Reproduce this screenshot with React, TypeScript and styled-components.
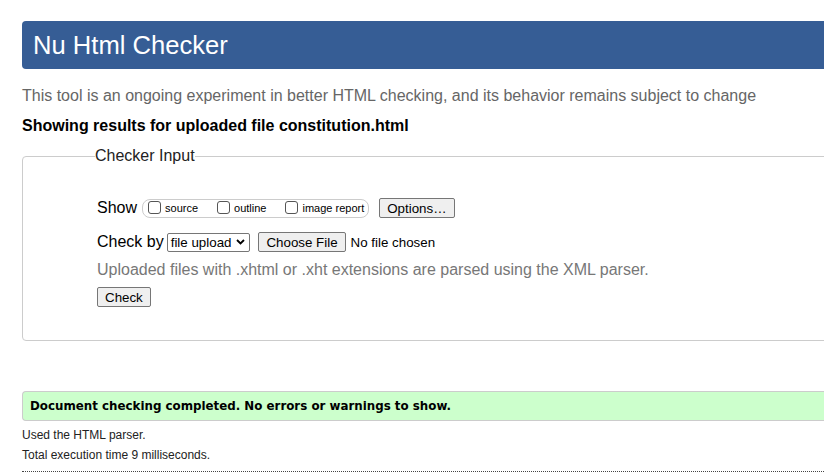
import React from "react";
import styled, { createGlobalStyle } from "styled-components";

const Global = createGlobalStyle`
  html, body { margin: 0; padding: 0; background: #fff; overflow: hidden; }
  body { font-family: "Liberation Sans", Arial, sans-serif; color: #000; }
`;

const Page = styled.div`
  width: 1100px;
  padding: 21px 0 0 22px;
  box-sizing: border-box;
`;

const Header = styled.h1`
  margin: 0;
  height: 48px;
  background: #365d95;
  color: #fff;
  border-radius: 4px;
  font-weight: normal;
  font-size: 25.6px;
  line-height: 48px;
  padding-left: 11px;
`;

const Tagline = styled.p`
  margin: 17px 0 0;
  color: #666;
  font-size: 16px;
  line-height: 20px;
`;

const Showing = styled.p`
  margin: 10px 0 0;
  font-weight: bold;
  font-size: 16px;
  line-height: 20px;
`;

const Fieldset = styled.fieldset`
  margin: 11px 0 0;
  border: 1px solid #ccc;
  border-radius: 4px;
  padding: 0 0 0 74px;
  height: 194px;
  box-sizing: border-box;
`;

const Legend = styled.legend`
  font-size: 16px;
  padding: 0;
  color: #222;
  margin-left: -2px;
`;

const Rows = styled.div`
  display: flex;
  flex-direction: column;
  padding-top: 32px;
`;

const Row = styled.div<{ $mt?: number }>`
  display: flex;
  align-items: center;
  margin-top: ${p => p.$mt ?? 0}px;
  font-size: 16px;
  height: 22px;
`;

const Label = styled.span`
  font-size: 16px;
  margin-right: 3px;
`;

const Pill = styled.span`
  display: inline-flex;
  align-items: center;
  border: 1px solid #ccc;
  border-radius: 8px;
  height: 19px;
  box-sizing: border-box;
  padding: 0 4px 0 5px;
  margin-left: 2px;
  gap: 19px;
`;

const Opt = styled.label`
  display: inline-flex;
  align-items: center;
  font-size: 11px;
  color: #000;
`;

const Box = styled.span`
  width: 13px;
  height: 13px;
  border: 1px solid #555;
  border-radius: 3px;
  margin-right: 4px;
  box-sizing: border-box;
  display: inline-block;
  position: relative;
  top: -1px;
`;

const Button = styled.span<{ $ml?: number }>`
  display: inline-flex;
  align-items: center;
  justify-content: center;
  height: 20px;
  box-sizing: border-box;
  border: 1px solid #767676;
  border-radius: 2px;
  background: #efefef;
  font-size: 13.33px;
  padding: 0 7px;
  margin-left: ${p => p.$ml ?? 0}px;
  color: #000;
`;

const Select = styled.span`
  display: inline-flex;
  align-items: center;
  height: 19px;
  box-sizing: border-box;
  border: 1px solid #767676;
  border-radius: 2px;
  font-size: 13.33px;
  padding: 0 4px 0 3px;
  gap: 5px;
`;

const NoFile = styled.span`
  font-size: 13.33px;
  margin-left: 5px;
`;

const Hint = styled.div`
  color: #777;
  font-size: 16px;
  margin-top: 7px;
  line-height: 20px;
`;

const Result = styled.div`
  margin-top: 50px;
  height: 30px;
  box-sizing: border-box;
  background: #ccffcc;
  border: 1px solid #ccc;
  border-right: none;
  border-radius: 4px 0 0 4px;
  font-family: "DejaVu Sans", Verdana, sans-serif;
  font-weight: bold;
  font-size: 11.85px;
  display: flex;
  align-items: center;
  padding-left: 7px;
`;

const Small = styled.p<{ $mt: number }>`
  margin: ${p => p.$mt}px 0 0;
  font-size: 12px;
  line-height: 14px;
  color: #222;
`;

const Rule = styled.hr`
  margin: 9px 0 0;
  border: none;
  border-top: 1px dotted #444;
`;

const Chevron = () => (
  <svg width="9" height="6" viewBox="0 0 9 6">
    <path d="M1 1l3.5 3.5L8 1" stroke="#000" strokeWidth="1.8" fill="none" />
  </svg>
);

export default function App() {
  return (
    <>
      <Global />
      <Page>
        <Header>Nu Html Checker</Header>
        <Tagline>This tool is an ongoing experiment in better HTML checking, and its behavior remains subject to change</Tagline>
        <Showing>Showing results for uploaded file constitution.html</Showing>
        <Fieldset>
          <Legend>Checker Input</Legend>
          <Rows>
            <Row>
              <Label>Show</Label>
              <Pill>
                <Opt><Box />source</Opt>
                <Opt><Box />outline</Opt>
                <Opt><Box />image report</Opt>
              </Pill>
              <Button $ml={10}>Options…</Button>
            </Row>
            <Row $mt={12}>
              <Label>Check by</Label>
              <Select>file upload <Chevron /></Select>
              <Button $ml={8}>Choose File</Button>
              <NoFile>No file chosen</NoFile>
            </Row>
            <Hint>Uploaded files with .xhtml or .xht extensions are parsed using the XML parser.</Hint>
            <Row $mt={6}>
              <Button>Check</Button>
            </Row>
          </Rows>
        </Fieldset>
        <Result>Document checking completed. No errors or warnings to show.</Result>
        <Small $mt={7}>Used the HTML parser.</Small>
        <Small $mt={6}>Total execution time 9 milliseconds.</Small>
        <Rule />
      </Page>
    </>
  );
}
